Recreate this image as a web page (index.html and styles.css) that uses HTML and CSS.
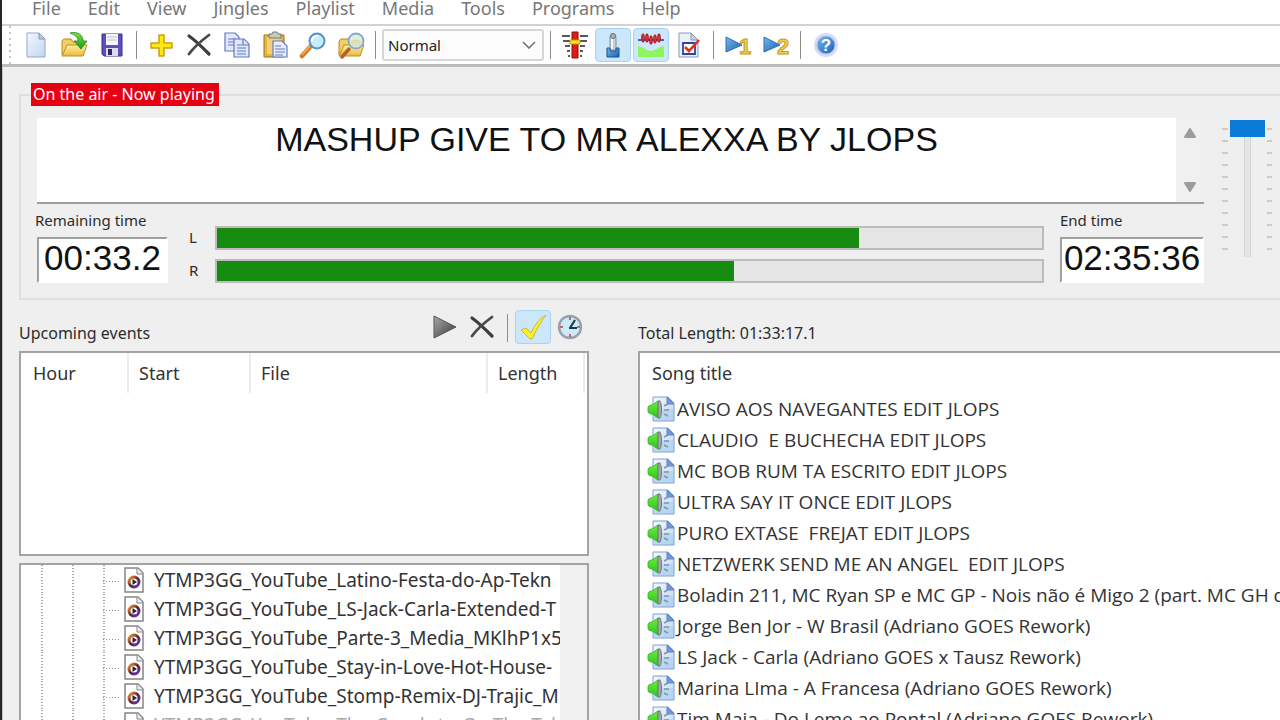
FILE: index.html
```
<!DOCTYPE html>
<html lang="en">
<head>
<meta charset="utf-8">
<title>Radio automation</title>
<link rel="stylesheet" href="styles.css">
</head>
<body>
<svg class="sprite" aria-hidden="true">
  <defs>
    <linearGradient id="paper" x1="0" y1="0" x2="1" y2="1"><stop offset="0" stop-color="#f4f8fd"/><stop offset="1" stop-color="#bfd7f0"/></linearGradient>
    <linearGradient id="gold" x1="0" y1="0" x2="0" y2="1"><stop offset="0" stop-color="#fff0a0"/><stop offset="1" stop-color="#e9b93c"/></linearGradient>
    <linearGradient id="green" x1="0" y1="0" x2="0" y2="1"><stop offset="0" stop-color="#7be33c"/><stop offset="1" stop-color="#1d9a1a"/></linearGradient>
    <linearGradient id="horn" x1="0" y1="0" x2="0" y2="1"><stop offset="0" stop-color="#6df03c"/><stop offset="1" stop-color="#2fc024"/></linearGradient>
    <linearGradient id="blue" x1="0" y1="0" x2="1" y2="1"><stop offset="0" stop-color="#7ab8ee"/><stop offset="1" stop-color="#1560b4"/></linearGradient>
    <linearGradient id="grey" x1="0" y1="0" x2="1" y2="1"><stop offset="0" stop-color="#a8a8a8"/><stop offset="1" stop-color="#3c3c3c"/></linearGradient>
    <linearGradient id="ring" x1="0" y1="0" x2="1" y2="1"><stop offset="0" stop-color="#ff9a2e"/><stop offset=".5" stop-color="#5b2430"/><stop offset="1" stop-color="#6a35d0"/></linearGradient>
    <symbol id="i-song" viewBox="0 0 28 28">
      <path d="M6 2h15l6 6v18H6z" fill="url(#paper)" stroke="#7c9fd2"/>
      <path d="M7 14h19v11H7z" fill="#a5cdf0" opacity=".55"/>
      <path d="M20 2v7h7z" fill="#7396d8" stroke="#6687c8"/>
      <path d="M1 12c1-2 3-2 4-2l6-4v17l-6-4c-1 0-3 0-4-2z" fill="url(#horn)" stroke="#35b52a" stroke-width=".8"/>
      <path d="M11 6h2c2 4 2 13 0 17h-2z" fill="#a3aaaa" stroke="#6c7876"/>
      <path d="M17 11l4-2M17 15h5M17 19l4 2" stroke="#7e95ac" stroke-width="1.5" fill="none"/>
    </symbol>
    <symbol id="i-media" viewBox="0 0 20 26">
      <path d="M1 1h13l5 5v19H1z" fill="#fff" stroke="#858585" stroke-width="1.5"/>
      <path d="M13 1v6h6" fill="#eee" stroke="#858585"/>
      <circle cx="10" cy="15" r="5" fill="#fff" stroke="url(#ring)" stroke-width="3"/>
      <path d="M8.500 12l4.500 3-4.500 3z" fill="#2b2333"/>
    </symbol>
    <symbol id="i-folder" viewBox="0 0 28 28">
      <path d="M2 24V10l2-2h7l2 3h10v4" fill="#f2cf63" stroke="#b98a22"/>
      <path d="M2 25l5-11h20l-4 11z" fill="url(#gold)" stroke="#bf9024"/>
    </symbol>
    <symbol id="i-cross" viewBox="0 0 28 28">
      <path d="M4 5c6 4 13 11 20 18" stroke="#3d3d3d" stroke-width="3.200" stroke-linecap="round" fill="none"/>
      <path d="M24 4C16 10 9 16 4 23" stroke="#4a4a4a" stroke-width="2.800" stroke-linecap="round" fill="none"/>
    </symbol>
  </defs>
</svg>

<div class="window">
  <nav class="menubar">
    <button type="button">File</button><button type="button">Edit</button><button type="button">View</button><button type="button">Jingles</button><button type="button">Playlist</button><button type="button">Media</button><button type="button">Tools</button><button type="button">Programs</button><button type="button">Help</button>
  </nav>

  <div class="toolbar" role="toolbar" aria-label="Main">
    <div class="group">
      <button type="button" class="tool" aria-label="New"><svg viewBox="0 0 28 28"><path d="M5 2h12l6 6v18H5z" fill="url(#paper)" stroke="#93a7c4"/><path d="M17 2v6h6z" fill="#b9cbe0" stroke="#8498b5"/></svg></button>
      <button type="button" class="tool" aria-label="Open"><svg viewBox="0 0 28 28"><use href="#i-folder"/><path d="M10 2c8-2 13 2 13 8h4l-6 8-7-8h4c0-4-3-6-8-8z" fill="url(#green)" stroke="#1f8a22" stroke-width=".8"/></svg></button>
      <button type="button" class="tool" aria-label="Save"><svg viewBox="0 0 28 28"><path d="M4 3h20v22H6l-2-2z" fill="#5a50b8" stroke="#39318c"/><path d="M8 3h12v11H8z" fill="#f6f6fa"/><path d="M9 6h10M9 9h10" stroke="#c0c0cc"/><path d="M8 17h12v8H8z" fill="#dcdcf0"/><path d="M10 18h4v6h-4z" fill="#2c2670"/></svg></button>
    </div>
    <span class="sep"></span>
    <div class="group">
      <button type="button" class="tool" aria-label="Add"><svg viewBox="0 0 28 28"><path d="M12 4h5v8h8v5h-8v8h-5v-8H4v-5h8z" fill="#ffe712" stroke="#cf9d15" stroke-width="1.500" stroke-linejoin="round"/></svg></button>
      <button type="button" class="tool" aria-label="Delete"><svg viewBox="0 0 28 28"><use href="#i-cross"/></svg></button>
      <button type="button" class="tool" aria-label="Copy"><svg viewBox="0 0 28 28"><g fill="#dfe9fb" stroke="#6478bd" stroke-width="1.200"><path d="M2 2h10l4 4v14H2z"/><path d="M5 8h8M5 11h8M5 14h8"/><path d="M11 8h10l5 5v13H11z"/><path d="M20 8v6h6M14 14h5M14 17h9M14 20h9M14 23h9"/></g></svg></button>
      <button type="button" class="tool" aria-label="Paste"><svg viewBox="0 0 28 28"><path d="M3 4h20v22H3z" fill="#e5b43a" stroke="#9c7522"/><path d="M6 6h14v17H6z" fill="#f0d27a"/><path d="M8 3h3l1-2h4l1 2h3v4H8z" fill="#c9c9c4" stroke="#77766c"/><g fill="#e4edfc" stroke="#6478bd" stroke-width="1.200"><path d="M12 10h9l5 5v11H12z"/><path d="M14 15h6M14 18h10M14 21h10M14 24h8"/></g></svg></button>
      <button type="button" class="tool" aria-label="Find"><svg viewBox="0 0 28 28"><path d="M3 25l8-9" stroke="#d87722" stroke-width="4.500" stroke-linecap="round"/><path d="M3 24l8-9" stroke="#f8b25e" stroke-width="1.500"/><circle cx="18" cy="10" r="7.500" fill="#c7ecfb" stroke="#5b8fcb" stroke-width="2"/><path d="M13 10c0-4 3-5 6-5" stroke="#fff" stroke-width="2" fill="none"/></svg></button>
      <button type="button" class="tool" aria-label="Find in folder"><svg viewBox="0 0 28 28"><use href="#i-folder"/><path d="M5 26l7-8" stroke="#b4622c" stroke-width="3.500" stroke-linecap="round"/><circle cx="19" cy="10" r="7.500" fill="#d4ecdf" fill-opacity=".85" stroke="#8aa5cd" stroke-width="1.800"/><path d="M14 12c3-3 7-3 10-1" stroke="#e8dc8c" stroke-width="2" fill="none"/></svg></button>
    </div>
    <span class="sep"></span>
    <select class="mode" aria-label="Mode"><option>Normal</option></select>
    <span class="sep"></span>
    <div class="group">
      <button type="button" class="tool" aria-label="Mixer"><svg viewBox="0 0 28 28"><path d="M1 5h8M19 5h8M2 10h7M19 10h7M4 15h5M19 15h5M6 20h3M19 20h3M7 25h2M19 25h2" stroke="#222" stroke-width="1.500"/><path d="M11 1h6v26h-6z" fill="#dc1d16" stroke="#8e0f0b"/><path d="M9 9h10v4H9z" fill="#ffe114" stroke="#c99a10"/></svg></button>
      <button type="button" class="tool on" aria-label="Microphone"><svg viewBox="0 0 28 28"><path d="M11 7c0-6 6-6 6 0v12h-6z" fill="#c6ced6" stroke="#8592a0"/><path d="M13 6v12" stroke="#fff" stroke-width="1.500"/><circle cx="14" cy="5" r="2.500" fill="#aab3bb" stroke="#68747e"/><path d="M8 17h3v3h6v-3h3v9H8z" fill="url(#blue)" stroke="#1a528e"/></svg></button>
      <button type="button" class="tool on" aria-label="Waveform"><svg viewBox="0 0 28 28"><path d="M1 9h26" stroke="#18379b" stroke-width="1.500"/><g fill="#ef4a44" stroke="#a81322" stroke-width="1.200"><ellipse cx="6" cy="7" rx="1.200" ry="4"/><ellipse cx="10" cy="7" rx="1.200" ry="4"/><ellipse cx="14" cy="9" rx="1.200" ry="4"/><ellipse cx="18" cy="8" rx="1.200" ry="4"/><ellipse cx="22" cy="7" rx="1.200" ry="4"/></g><path d="M1 15c5 1 9 5 13 5s7-4 13-5v11H1z" fill="#8ff55c"/></svg></button>
      <button type="button" class="tool" aria-label="Checklist"><svg viewBox="0 0 28 28"><path d="M4 2h12l7 7v17H4z" fill="#edf0f8" stroke="#8a96b4"/><path d="M16 2v7h7z" fill="#c8d1e2" stroke="#8a96b4"/><path d="M8 12h12v11H8z" fill="#fff" stroke="#2647a8" stroke-width="1.800"/><path d="M10 16l4 4 10-11" stroke="#e52f1c" stroke-width="2.600" fill="none"/></svg></button>
    </div>
    <span class="sep"></span>
    <div class="group">
      <button type="button" class="tool" aria-label="Play 1"><svg viewBox="0 0 28 28"><path d="M2 6l16 8-16 7z" fill="url(#blue)" stroke="#2c6cb4"/><text x="15" y="23" class="num">1</text></svg></button>
      <button type="button" class="tool" aria-label="Play 2"><svg viewBox="0 0 28 28"><path d="M2 6l16 8-16 7z" fill="url(#blue)" stroke="#2c6cb4"/><text x="15" y="23" class="num">2</text></svg></button>
    </div>
    <span class="sep"></span>
    <div class="group">
      <button type="button" class="tool" aria-label="Help"><svg viewBox="0 0 28 28"><circle cx="15" cy="14" r="12" fill="#dcd8fb"/><circle cx="15" cy="14" r="9" fill="url(#blue)" stroke="#a9c4f2"/><text x="15" y="20" class="help">?</text></svg></button>
    </div>
  </div>

  <main class="content">
    <fieldset class="air">
      <legend>On the air - Now playing</legend>
      <div class="player">
        <div class="title-box">
          <p class="now">MASHUP GIVE TO MR ALEXXA BY JLOPS</p>
          <div class="scroll">
            <button type="button" aria-label="Scroll up"><svg viewBox="0 0 14 12"><path d="M7 2l5 8H2z" fill="#9c9c9c" stroke="#9c9c9c" stroke-width="2" stroke-linejoin="round"/></svg></button>
            <button type="button" aria-label="Scroll down"><svg viewBox="0 0 14 12"><path d="M7 10l5-8H2z" fill="#9c9c9c" stroke="#9c9c9c" stroke-width="2" stroke-linejoin="round"/></svg></button>
          </div>
        </div>
        <div class="status">
          <div class="time remaining"><span class="label">Remaining time</span><output>00:33.2</output></div>
          <div class="levels">
            <label for="lv-l">L</label><progress id="lv-l" max="829" value="645"></progress>
            <label for="lv-r">R</label><progress id="lv-r" max="829" value="520"></progress>
          </div>
          <div class="time end"><span class="label">End time</span><output>02:35:36</output></div>
        </div>
      </div>
      <div class="volume">
        <span class="ticks"></span>
        <input type="range" min="0" max="100" value="100" aria-label="Volume">
        <span class="ticks"></span>
      </div>
    </fieldset>

    <div class="panes">
      <section class="pane">
        <header class="pane-head">
          <h2>Upcoming events</h2>
          <div class="actions">
            <button type="button" class="tool" aria-label="Play"><svg viewBox="0 0 28 28"><path d="M3 3l22 11L3 25z" fill="url(#grey)" stroke="#555"/></svg></button>
            <button type="button" class="tool" aria-label="Remove"><svg viewBox="0 0 28 28"><use href="#i-cross"/></svg></button>
            <span class="sep"></span>
            <button type="button" class="tool on" aria-label="Enabled"><svg viewBox="0 0 28 28"><path d="M2 17l5-2 5 5C15 13 20 6 27 2 22 9 17 17 13 26h-2z" fill="#ffee22" stroke="#b9ad3a" stroke-width=".8"/></svg></button>
            <button type="button" class="tool" aria-label="Schedule"><svg viewBox="0 0 28 28"><circle cx="14" cy="14" r="11" fill="#ccebf8" stroke="#95a3ad" stroke-width="2.500"/><path d="M14 4v3M14 21v3M4 14h3M21 14h3" stroke="#d06068" stroke-width="2"/><path d="M14 15l5-8M13 15h8" stroke="#1f3a4a" stroke-width="2.200" fill="none"/></svg></button>
          </div>
        </header>
        <div class="box events">
          <table>
            <colgroup><col class="c-hour"><col class="c-start"><col class="c-file"><col class="c-length"><col></colgroup>
            <thead><tr><th>Hour</th><th>Start</th><th>File</th><th>Length</th><th class="rest"></th></tr></thead>
          </table>
        </div>
        <div class="box tree">
          <ul>
            <li><i></i><i></i><i class="branch"></i><svg><use href="#i-media"/></svg><span>YTMP3GG_YouTube_Latino-Festa-do-Ap-Tekn</span></li>
            <li><i></i><i></i><i class="branch"></i><svg><use href="#i-media"/></svg><span>YTMP3GG_YouTube_LS-Jack-Carla-Extended-T</span></li>
            <li><i></i><i></i><i class="branch"></i><svg><use href="#i-media"/></svg><span>YTMP3GG_YouTube_Parte-3_Media_MKlhP1x5a</span></li>
            <li><i></i><i></i><i class="branch"></i><svg><use href="#i-media"/></svg><span>YTMP3GG_YouTube_Stay-in-Love-Hot-House-</span></li>
            <li><i></i><i></i><i class="branch"></i><svg><use href="#i-media"/></svg><span>YTMP3GG_YouTube_Stomp-Remix-DJ-Trajic_M</span></li>
            <li class="faded"><i></i><i></i><i class="branch"></i><svg><use href="#i-media"/></svg><span>YTMP3GG_YouTube_The-Couch-to-Go-The-Tek</span></li>
          </ul>
          <div class="track"></div>
        </div>
      </section>

      <section class="pane songs">
        <header class="pane-head"><h2>Total Length: 01:33:17.1</h2></header>
        <div class="box list">
          <h3>Song title</h3>
          <ul>
            <li><svg><use href="#i-song"/></svg>AVISO AOS NAVEGANTES EDIT JLOPS</li>
            <li><svg><use href="#i-song"/></svg>CLAUDIO  E BUCHECHA EDIT JLOPS</li>
            <li><svg><use href="#i-song"/></svg>MC BOB RUM TA ESCRITO EDIT JLOPS</li>
            <li><svg><use href="#i-song"/></svg>ULTRA SAY IT ONCE EDIT JLOPS</li>
            <li><svg><use href="#i-song"/></svg>PURO EXTASE  FREJAT EDIT JLOPS</li>
            <li><svg><use href="#i-song"/></svg>NETZWERK SEND ME AN ANGEL  EDIT JLOPS</li>
            <li><svg><use href="#i-song"/></svg>Boladin 211, MC Ryan SP e MC GP - Nois não é Migo 2 (part. MC GH d</li>
            <li><svg><use href="#i-song"/></svg>Jorge Ben Jor - W Brasil (Adriano GOES Rework)</li>
            <li><svg><use href="#i-song"/></svg>LS Jack - Carla (Adriano GOES x Tausz Rework)</li>
            <li><svg><use href="#i-song"/></svg>Marina LIma - A Francesa (Adriano GOES Rework)</li>
            <li><svg><use href="#i-song"/></svg>Tim Maia - Do Leme ao Pontal (Adriano GOES Rework)</li>
          </ul>
        </div>
      </section>
    </div>
  </main>
</div>
</body>
</html>
```
FILE: styles.css
```
* { box-sizing: border-box; }
body {
  margin: 0;
  height: 100vh;
  overflow: hidden;
  background: #efefef;
  color: #2c2c2c;
  font-family: "Noto Sans", "Open Sans", sans-serif;
  font-size: 18px;
}
button { padding: 0; border: 0; background: none; font: inherit; color: inherit; }
ul, p, h2, h3 { margin: 0; padding: 0; list-style: none; font-weight: 400; }
.sprite { position: absolute; width: 0; height: 0; }

.window {
  display: flex;
  flex-direction: column;
  height: 100%;
  border-left: 2px solid #26262a;
}
.menubar {
  display: flex;
  gap: 27px;
  height: 26px;
  padding-left: 30px;
  border-bottom: 2px solid #d2d2d2;
  background: #fff;
  color: #777;
  line-height: 16px;
}
.menubar button { height: 16px; white-space: nowrap; }
.toolbar {
  display: flex;
  align-items: center;
  gap: 6px;
  height: 41px;
  flex: none;
  padding-left: 16px;
  border-bottom: 3px solid #bcbcbc;
  background: linear-gradient(#fff, #fff) content-box, repeating-linear-gradient(#c4c4c4 0 2px, #fff 2px 6px) 7px 0 / 2px 100% no-repeat, #fff;
}
.group { display: flex; gap: 2px; }
.tool {
  display: flex;
  align-items: center;
  justify-content: center;
  width: 36px;
  height: 34px;
  border: 1px solid transparent;
  border-radius: 4px;
}
.tool svg { width: 28px; height: 28px; }
.tool.on { background: #cce6fa; border-color: #a6d4f5; }
.sep { width: 1px; height: 28px; background: #8c8c8c; }
.num {
  font: bold 22px "Liberation Sans", sans-serif;
  fill: #f2d24a;
  stroke: #c39b2b;
  stroke-width: 1px;
}
.help { font: bold 17px "Liberation Sans", sans-serif; fill: #fff; text-anchor: middle; }
.mode {
  width: 162px;
  height: 32px;
  padding: 0 4px;
  border: 2px solid #d6d6d6;
  border-radius: 3px;
  appearance: none;
  background: url("data:image/svg+xml,%3Csvg xmlns='http://www.w3.org/2000/svg' width='14' height='8'%3E%3Cpath d='M1 1l6 6 6-6' fill='none' stroke='%23707070' stroke-width='1.500'/%3E%3C/svg%3E") right 6px center no-repeat, #fcfcfc;
  color: #222;
  font: 15px "Noto Sans", sans-serif;
}

.content {
  display: flex;
  flex-direction: column;
  flex: 1;
  min-height: 0;
  padding: 16px 0 0 16px;
  border-left: 1px solid #c4c4c4;
}
.air {
  display: flex;
  gap: 18px;
  min-width: 0;
  margin: 0;
  padding: 12px 8px 15px 16px;
  border: 2px solid #dfdfdf;
  border-right: 0;
}
.air legend {
  margin-left: -6px;
  padding: 0 4px 0 2px;
  background: #e60012;
  color: #fff;
  font-size: 16px;
  line-height: 23px;
}
.player { flex: 1; min-width: 0; }
.title-box {
  display: flex;
  height: 86px;
  border-bottom: 2px solid #a0a0a0;
  background: #fff;
}
.now {
  flex: 1;
  color: #111;
  font: 34px/42px "Liberation Sans", sans-serif;
  text-align: center;
}
.scroll {
  display: flex;
  flex-direction: column;
  justify-content: space-between;
  width: 28px;
  padding: 9px 0;
  background: #f0f0f0;
}
.scroll button { display: flex; justify-content: center; height: 12px; }
.scroll svg { width: 14px; height: 12px; }
.status { display: flex; padding-top: 7px; }
.label, .levels { font-size: 15px; }
h2 { font-size: 16px; }
.label { display: block; margin-left: -2px; line-height: 18px; white-space: nowrap; }
.time { flex: none; }
.remaining { width: 131px; }
.end { width: 144px; }
.end .label { margin-left: 0; }
.time output {
  display: block;
  height: 46px;
  margin-top: 8px;
  border: 2px solid #a0a0a0;
  border-right-color: #fff;
  border-bottom-color: #fff;
  background: #fff;
  color: #111;
  font: 35px/38px "Liberation Sans", sans-serif;
  text-align: center;
}
.levels {
  display: grid;
  grid-template-columns: 26px 1fr;
  grid-auto-rows: 24px;
  gap: 9px 0;
  flex: 1;
  align-content: start;
  padding: 15px 16px 0 21px;
  line-height: 22px;
}
progress {
  width: 100%;
  height: 24px;
  border: 2px solid #bcbcbc;
  appearance: none;
  background: #e6e6e6;
}
progress::-webkit-progress-bar { background: #e6e6e6; }
progress::-webkit-progress-value { background: #168c10; }

.volume { display: flex; gap: 2px; flex: none; width: 50px; height: 140px; }
.ticks {
  flex: 1;
  height: 123px;
  margin: 10px 0 0;
  background: repeating-linear-gradient(#cbcbcb 0 2px, transparent 2px 12px);
}
.volume input {
  width: 35px;
  height: 137px;
  margin: 2px 0 0;
  appearance: none;
  background: linear-gradient(#e6e6e6, #e6e6e6) center / 5px 100% no-repeat, linear-gradient(#d4d4d4, #d4d4d4) center / 7px 100% no-repeat;
  writing-mode: vertical-lr;
  direction: rtl;
}
.volume input::-webkit-slider-thumb {
  appearance: none;
  width: 35px;
  height: 17px;
  background: #0a7bd6;
}

.panes {
  display: grid;
  grid-template-columns: minmax(0, 570fr) minmax(0, 642fr);
  gap: 49px;
  flex: 1;
  min-height: 0;
}
.pane { display: flex; flex-direction: column; min-width: 0; min-height: 0; }
.pane-head {
  display: flex;
  justify-content: space-between;
  flex: none;
  height: 51px;
  padding: 10px 1px 0 0;
}
.pane-head h2 { line-height: 46px; white-space: nowrap; }
.actions { display: flex; gap: 1px; }
.actions .sep { margin: 4px 6px 0; }
.box { border: 2px solid #a3a3a3; background: #fff; color: #333; }
.events { height: 205px; flex: none; margin-bottom: 7px; }
table { width: 100%; border-collapse: collapse; table-layout: fixed; }
th {
  height: 40px;
  padding: 0 0 0 10px;
  border-right: 2px solid #ececec;
  font-weight: 400;
  text-align: left;
}
th:first-child { padding-left: 12px; }
th.rest { border: 0; padding: 0; }
.c-hour { width: 107px; }
.c-start { width: 122px; }
.c-file { width: 237px; }
.c-length { width: 97px; }
.tree { display: flex; flex: 1; min-height: 0; border-bottom: 0; font-size: 19px; overflow: hidden; }
.tree ul { flex: 1; min-width: 0; padding-left: 20px; overflow: hidden; }
.tree li { display: flex; align-items: center; height: 29px; white-space: nowrap; }
.tree li i { flex: none; width: 31px; height: 29px; background: repeating-linear-gradient(#a8a8a8 0 1px, transparent 1px 3px) 0 0 / 2px 100% no-repeat; }
.tree li .branch {
  width: 21px;
  background: repeating-linear-gradient(#a8a8a8 0 1px, transparent 1px 3px) 0 0 / 2px 100% no-repeat, repeating-linear-gradient(90deg, #909090 0 1px, transparent 1px 3px) 0 16px / 17px 1px no-repeat;
}
.tree svg { flex: none; width: 20px; height: 26px; margin-right: 10px; }
.tree .faded { color: #aaa; }
.track { width: 27px; background: #f0f0f0; }
.list { flex: 1; min-height: 0; border-right: 0; border-bottom: 0; overflow: hidden; }
.list h3 { padding-left: 12px; font-size: 18px; line-height: 40px; }
.list li {
  display: flex;
  align-items: center;
  gap: 2px;
  height: 31px;
  padding-left: 7px;
  font-family: "Open Sans", sans-serif;
  font-size: 19px;
  white-space: pre;
}
.list svg { flex: none; width: 28px; height: 28px; }
```
